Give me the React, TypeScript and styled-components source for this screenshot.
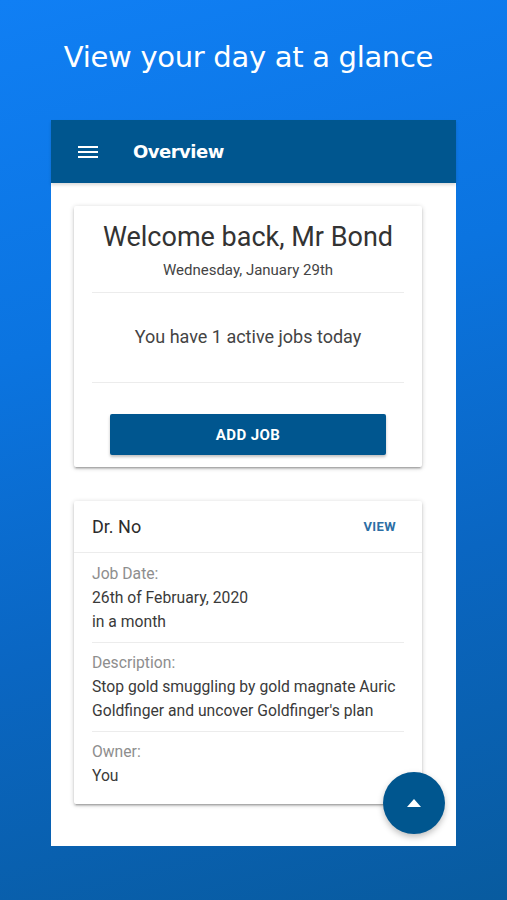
import styled, {createGlobalStyle} from "styled-components";
import React from "react";

const Global = createGlobalStyle`
  html, body { margin: 0; padding: 0; }
  body { font-family: Roboto, "Liberation Sans", sans-serif; }
  #root { height: 900px; }
`

const Screen = styled.div`
  height: 900px;
  background: linear-gradient(165deg, #107ff4 0%, #0b74e0 35%, #0a66c2 65%, #085b9f 100%);
  display: flex;
  flex-direction: column;
  align-items: center;
  overflow: hidden;
`

const Headline = styled.h1`
  margin: 0 10px 0 0;
  padding-top: 36px;
  height: 120px;
  box-sizing: border-box;
  font-family: "DejaVu Sans", Verdana, sans-serif;
  font-weight: normal;
  font-size: 29px;
  line-height: 42px;
  color: #fff;
  letter-spacing: -0.3px;
`

const Phone = styled.div`
  position: relative;
  width: 405px;
  height: 726px;
  background: #fff;
  display: flex;
  flex-direction: column;
`

const AppBar = styled.header`
  height: 63px;
  background: #00568f;
  display: flex;
  align-items: center;
  padding-left: 27px;
  gap: 35px;
  box-shadow: 0 2px 3px rgba(0,0,0,0.15);
  > .title{
    color: #fff;
    font-family: "DejaVu Sans", Verdana, sans-serif;
    font-weight: bold;
    font-size: 18px;
    letter-spacing: -0.5px;
  }
`

const Burger = styled.div`
  width: 20px;
  display: flex;
  flex-direction: column;
  gap: 3px;
  > span{ height: 2px; background: #fff; }
`

const Content = styled.main`
  padding: 23px 34px 0 23px;
  display: flex;
  flex-direction: column;
  gap: 34px;
`

const Card = styled.section`
  background: #fff;
  border-radius: 2px;
  box-shadow: 0 2px 2px rgba(0,0,0,0.14), 0 3px 1px -2px rgba(0,0,0,0.12), 0 1px 5px rgba(0,0,0,0.2);
`

const Welcome = styled(Card)`
  height: 261px;
  box-sizing: border-box;
  padding: 15px 18px 0;
  text-align: center;
  color: #333;
  > h2{
    margin: 0;
    font-weight: normal;
    font-size: 27px;
    line-height: 32px;
    color: #333;
  }
  > .date{
    margin-top: 7px;
    font-size: 15px;
    line-height: 20px;
    color: #444;
  }
  > .active{
    font-size: 18px;
    line-height: 24px;
    padding: 32px 0 33px;
    color: #444;
  }
`

const Divider = styled.hr<{ $top?: number }>`
  border: none;
  border-top: 1px solid #ececec;
  margin: ${p => p.$top ?? 0}px 0 0;
`

const AddButton = styled.button`
  display: block;
  margin: 31px auto 0;
  width: 276px;
  height: 41px;
  border: none;
  border-radius: 2px;
  background: #00568f;
  color: #fff;
  font-family: Roboto, sans-serif;
  font-weight: bold;
  font-size: 15px;
  letter-spacing: 0.4px;
  box-shadow: 0 2px 3px rgba(0,0,0,0.25);
`

const JobHead = styled.div`
  height: 51px;
  display: flex;
  align-items: center;
  justify-content: space-between;
  padding: 0 26px 0 18px;
  border-bottom: 1px solid #ececec;
  > .name{ font-size: 18px; color: #2c2c2c; }
  > .view{ font-size: 13px; font-weight: bold; color: #2c6ea5; letter-spacing: 0.4px; }
`

const JobBody = styled.div`
  padding: 0 18px 16px;
`

const Field = styled.div<{ $last?: boolean }>`
  padding: ${p => p.$last ? '8px 0 0' : '8px 0 8px'};
  border-bottom: ${p => p.$last ? 'none' : '1px solid #ececec'};
  font-size: 15.7px;
  line-height: 24px;
  color: #3a3a3a;
  &:first-child{ padding-top: 9px; }
  > .label{ color: #8e8e8e; }
`

const Fab = styled.button`
  position: absolute;
  right: 11px;
  bottom: 12px;
  width: 62px;
  height: 62px;
  border-radius: 50%;
  border: none;
  background: #00568f;
  display: flex;
  align-items: center;
  justify-content: center;
  box-shadow: 0 3px 6px rgba(0,0,0,0.25);
`

export default function App(){
    return(
        <Screen>
            <Global/>
            <Headline>View your day at a glance</Headline>
            <Phone>
                <AppBar>
                    <Burger><span/><span/><span/></Burger>
                    <span className="title">Overview</span>
                </AppBar>
                <Content>
                    <Welcome>
                        <h2>Welcome back, Mr Bond</h2>
                        <div className="date">Wednesday, January 29th</div>
                        <Divider $top={12}/>
                        <div className="active">You have 1 active jobs today</div>
                        <Divider/>
                        <AddButton>ADD JOB</AddButton>
                    </Welcome>
                    <Card>
                        <JobHead>
                            <span className="name">Dr. No</span>
                            <span className="view">VIEW</span>
                        </JobHead>
                        <JobBody>
                            <Field>
                                <div className="label">Job Date:</div>
                                <div>26th of February, 2020</div>
                                <div>in a month</div>
                            </Field>
                            <Field>
                                <div className="label">Description:</div>
                                <div>Stop gold smuggling by gold magnate Auric Goldfinger and uncover Goldfinger's plan</div>
                            </Field>
                            <Field $last>
                                <div className="label">Owner:</div>
                                <div>You</div>
                            </Field>
                        </JobBody>
                    </Card>
                </Content>
                <Fab>
                    <svg width="14" height="8" viewBox="0 0 14 8"><path d="M7 0 L14 8 L0 8 Z" fill="#fff"/></svg>
                </Fab>
            </Phone>
        </Screen>
    )
}
